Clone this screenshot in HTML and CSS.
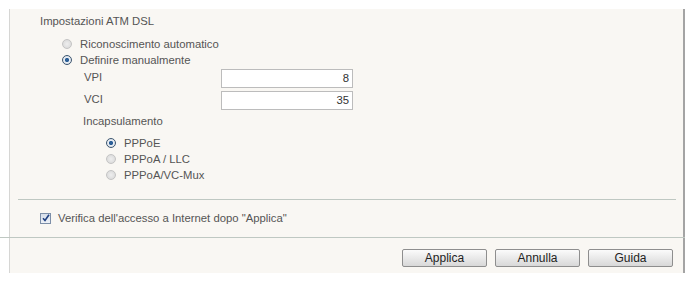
FILE: index.html
```html
<!DOCTYPE html>
<html>
<head>
<meta charset="utf-8">
<link rel="stylesheet" href="styles.css">
</head>
<body>
<div class="panel">
  <div class="settings">
    <div class="title">Impostazioni ATM DSL</div>
    <div class="radios">
      <div class="opt"><span class="radio"></span>Riconoscimento automatico</div>
      <div class="opt"><span class="radio on"></span>Definire manualmente</div>
    </div>
    <div class="manual">
      <div class="field"><span class="lbl">VPI</span><span class="input">8</span></div>
      <div class="field"><span class="lbl">VCI</span><span class="input">35</span></div>
      <div class="sub">Incapsulamento</div>
      <div class="encaps">
        <div class="opt"><span class="radio on"></span>PPPoE</div>
        <div class="opt"><span class="radio"></span>PPPoA / LLC</div>
        <div class="opt"><span class="radio"></span>PPPoA/VC-Mux</div>
      </div>
    </div>
  </div>
  <div class="divider"></div>
  <div class="check-row">
    <span class="checkbox"><svg width="8" height="8" viewBox="0 0 8 8"><path d="M1 4.2 L3 6.5 L7 0.8" fill="none" stroke="#1e3f80" stroke-width="1.6"/></svg></span>
    Verifica dell'accesso a Internet dopo "Applica"
  </div>
  <div class="divider full"></div>
  <div class="buttons">
    <span class="btn">Applica</span>
    <span class="btn">Annulla</span>
    <span class="btn">Guida</span>
  </div>
</div>
</body>
</html>
```
FILE: styles.css
```css
html, body {
  margin: 0;
  padding: 0;
  background: #ffffff;
}
body {
  font-family: "Liberation Sans", Arial, sans-serif;
  font-size: 11.3px;
  line-height: 16px;
  color: #555555;
}
.panel {
  margin: 9px 0 0 9px;
  width: 676px;
  height: 264px;
  box-sizing: border-box;
  background: #f9f7f3;
  border-left: 1px solid #d6d6d4;
  border-right: 2px solid #a4a4a4;
  display: flex;
  flex-direction: column;
}
.settings {
  padding: 4px 0 0 30px;
}
.title {
  height: 16px;
}
.radios {
  margin: 7px 0 0 22px;
}
.opt {
  display: flex;
  align-items: center;
  height: 16px;
}
.radio {
  width: 10px;
  height: 10px;
  box-sizing: border-box;
  border-radius: 50%;
  border: 1px solid #c4c4c4;
  background: radial-gradient(circle at 50% 50%, #eeeeee 0, #d6d6d6 100%);
  margin-right: 8px;
  flex: none;
}
.radio.on {
  border: 1px solid #3d5670;
  background: radial-gradient(circle at 50% 50%, #2c5f97 0, #2c5f97 1.8px, #e9eef4 2.4px, #d0d8e0 100%);
}
.manual {
  padding-left: 44px;
  margin-top: 1px;
}
.field {
  display: flex;
  align-items: center;
  height: 19px;
  margin-bottom: 3px;
}
.lbl {
  width: 137px;
  margin-top: -3px;
}
.input {
  width: 132px;
  height: 19px;
  box-sizing: border-box;
  border: 1px solid #bcbcbc;
  background: #ffffff;
  text-align: right;
  padding-right: 3px;
  line-height: 17px;
  color: #333;
}
.sub {
  margin-top: 2px;
  margin-left: -1px;
  height: 16px;
}
.encaps {
  margin: 6px 0 0 22px;
}
.divider {
  height: 1px;
  background: #bfc8c2;
  margin: 16px 7px 0 8px;
}
.divider.full {
  margin: 11px -2px 0 -10px;
}
.check-row {
  display: flex;
  align-items: center;
  height: 16px;
  margin: 10px 0 0 30px;
}
.checkbox {
  width: 11px;
  height: 11px;
  box-sizing: border-box;
  border: 1px solid #7d8fa8;
  background: linear-gradient(#d6deea, #eef2f7);
  margin-right: 7px;
  display: flex;
  align-items: center;
  justify-content: center;
}
.checkbox svg {
  display: block;
}
.buttons {
  display: flex;
  justify-content: flex-end;
  gap: 8px;
  margin: 11px 10px 0 0;
}
.btn {
  width: 85px;
  height: 18px;
  box-sizing: border-box;
  border: 1px solid #8e8e8e;
  border-radius: 2px;
  background: linear-gradient(#fbfbfb, #e6e6e6 60%, #d8d8d8);
  text-align: center;
  line-height: 16px;
  color: #222;
  font-size: 12px;
}
```
